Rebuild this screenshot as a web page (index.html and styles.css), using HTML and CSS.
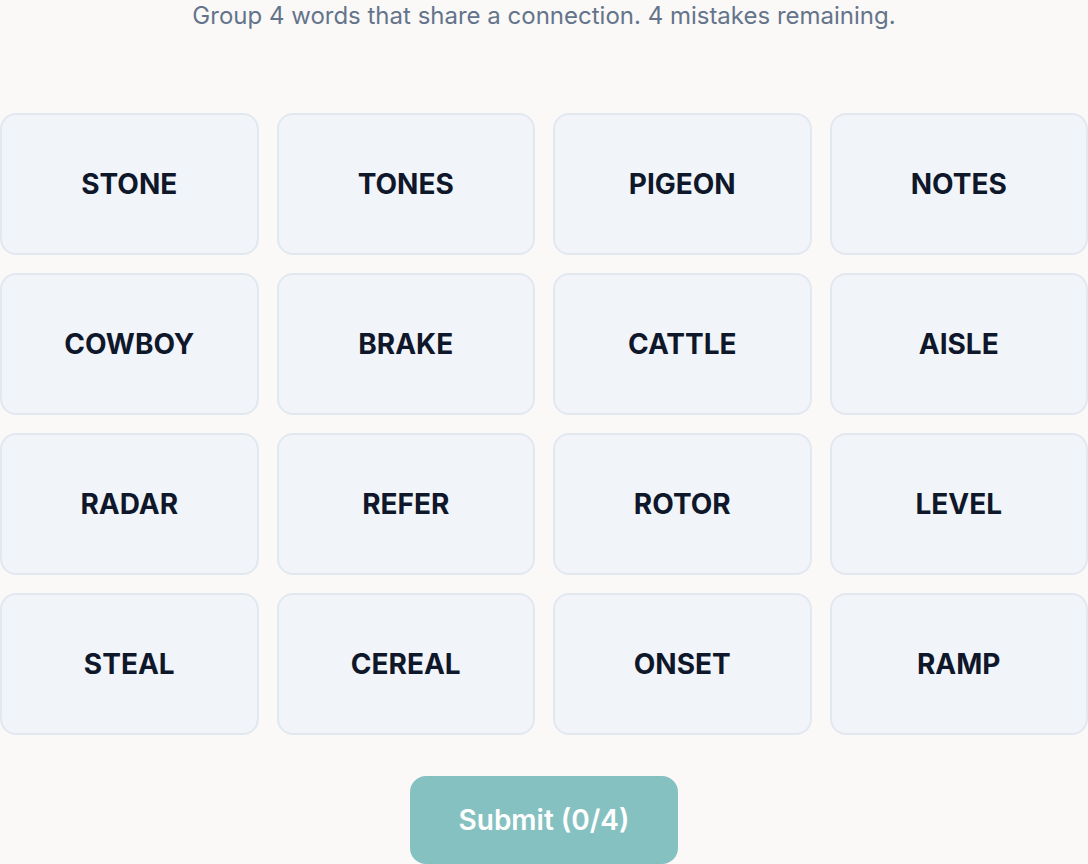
FILE: index.html
```html
<!DOCTYPE html>
<html lang="en">

<head>
    <meta charset="UTF-8">
    <meta name="viewport" content="width=device-width, initial-scale=1.0">
    <title>Connections</title>
    <link rel="stylesheet" href="styles.css">
</head>

<body>
    <p class="hint">Group 4 words that share a connection. 4 mistakes remaining.</p>

    <div class="board">
        <button class="tile">STONE</button>
        <button class="tile">TONES</button>
        <button class="tile">PIGEON</button>
        <button class="tile">NOTES</button>
        <button class="tile">COWBOY</button>
        <button class="tile">BRAKE</button>
        <button class="tile">CATTLE</button>
        <button class="tile">AISLE</button>
        <button class="tile">RADAR</button>
        <button class="tile">REFER</button>
        <button class="tile">ROTOR</button>
        <button class="tile">LEVEL</button>
        <button class="tile">STEAL</button>
        <button class="tile">CEREAL</button>
        <button class="tile">ONSET</button>
        <button class="tile">RAMP</button>
    </div>

    <div class="controls">
        <button class="submit" disabled>Submit (0/4)</button>
    </div>
</body>

</html>
```

FILE: styles.css
```css
body {
    margin: 0;
    background: #faf9f7;
    font-family: Inter, "Noto Sans", sans-serif;
    color: #0f172a;
}

.hint {
    margin: 0;
    text-align: center;
    font-size: 24px;
    line-height: 32px;
    color: #64748b;
}

.board {
    margin-top: 81px;
    display: grid;
    grid-template-columns: repeat(4, 1fr);
    grid-auto-rows: 142px;
    gap: 18px;
}

.tile {
    box-sizing: border-box;
    border: 2px solid #e2e8f0;
    border-radius: 16px;
    background: #f1f4f9;
    font-family: inherit;
    font-size: 28px;
    font-weight: 700;
    color: #0f172a;
    cursor: pointer;
}

.controls {
    margin-top: 41px;
    display: flex;
    justify-content: center;
}

.submit {
    width: 268px;
    height: 88px;
    border: none;
    border-radius: 16px;
    background: #86c1c1;
    color: #ffffff;
    font-family: inherit;
    font-size: 28px;
    font-weight: 600;
}
```
